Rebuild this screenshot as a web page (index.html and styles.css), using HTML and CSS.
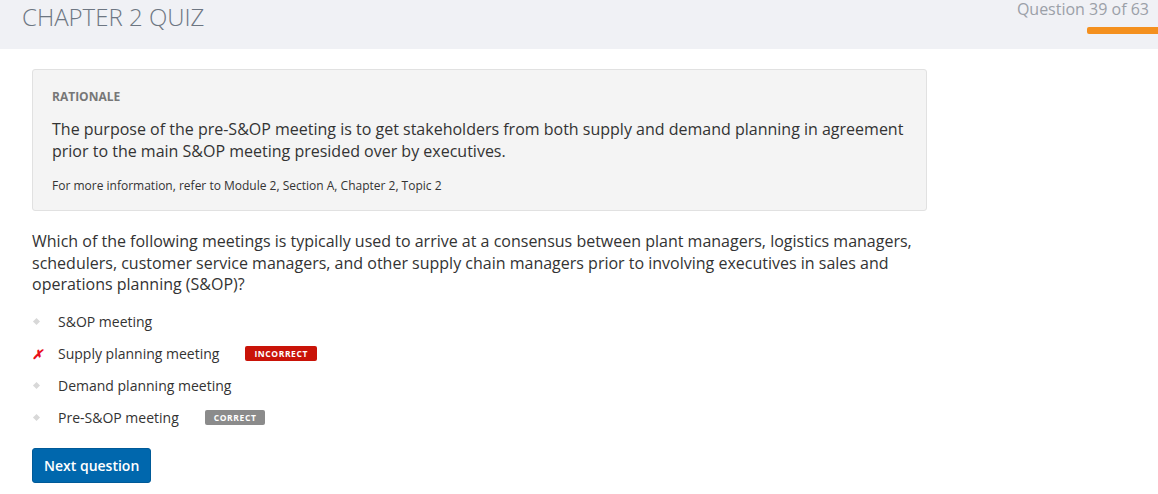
FILE: index.html
```html
<!DOCTYPE html>
<html>
<head>
<meta charset="utf-8">
<link rel="stylesheet" href="styles.css">
</head>
<body>
<header class="top">
  <h1 class="title">CHAPTER 2 QUIZ</h1>
  <div class="progress">
    <div class="count">Question 39 of 63</div>
    <div class="bar"></div>
  </div>
</header>
<main class="content">
  <section class="rationale">
    <div class="r-label">RATIONALE</div>
    <p class="r-text">The purpose of the pre-S&amp;OP meeting is to get stakeholders from both supply and demand planning in agreement prior to the main S&amp;OP meeting presided over by executives.</p>
    <p class="r-ref">For more information, refer to Module 2, Section A, Chapter 2, Topic 2</p>
  </section>
  <p class="question">Which of the following meetings is typically used to arrive at a consensus between plant managers, logistics managers, schedulers, customer service managers, and other supply chain managers prior to involving executives in sales and operations planning (S&amp;OP)?</p>
  <ul class="options">
    <li class="opt"><span class="mark dot"></span><span class="opt-text">S&amp;OP meeting</span></li>
    <li class="opt"><span class="mark x">&#x2717;</span><span class="opt-text">Supply planning meeting</span><span class="badge bad">INCORRECT</span></li>
    <li class="opt"><span class="mark dot"></span><span class="opt-text">Demand planning meeting</span></li>
    <li class="opt"><span class="mark dot"></span><span class="opt-text">Pre-S&amp;OP meeting</span><span class="badge good">CORRECT</span></li>
  </ul>
  <button class="next">Next question</button>
</main>
</body>
</html>
```
FILE: styles.css
```css
html, body { margin: 0; padding: 0; background: #fff; }
body { font-family: "Open Sans", "Noto Sans", sans-serif; color: #333; }
.top {
  height: 49px;
  background: #f0f1f5;
  display: flex;
  justify-content: space-between;
  align-items: flex-start;
}
.title {
  margin: 0;
  padding: 0 0 0 22px;
  font-weight: 300;
  font-size: 24px;
  line-height: 34px;
  color: #6d7682;
}
.progress {
  display: flex;
  flex-direction: column;
  align-items: flex-end;
}
.count {
  font-size: 16px;
  line-height: 20px;
  color: #9ba0a8;
  padding-right: 9px;
  margin-top: -1px;
}
.bar {
  margin-top: 8px;
  width: 71px;
  height: 7px;
  background: #f4901e;
  border-radius: 2px 0 0 2px;
}
.content { padding: 20px 32px 0 32px; width: 895px; }
.rationale {
  background: #f4f4f4;
  border: 1px solid #e1e1e1;
  border-radius: 3px;
  padding: 19px 19px 16px 19px;
}
.r-label { font-size: 12px; font-weight: 700; color: #777; line-height: 16px; }
.r-text { margin: 13px 0 0 0; font-size: 16px; line-height: 22px; color: #333; }
.r-ref { margin: 15px 0 0 0; font-size: 12px; line-height: 17px; color: #333; }
.question { margin: 20px 0 0 0; font-size: 16px; line-height: 21.5px; color: #333; }
.options { list-style: none; margin: 10px 0 0 0; padding: 0; }
.opt { display: flex; align-items: center; height: 32px; font-size: 14px; }
.mark { width: 26px; flex: none; display: flex; align-items: center; }
.dot::before {
  content: "";
  width: 5px; height: 5px;
  margin-left: 2px;
  background: #d8d8d8;
  transform: rotate(45deg);
  display: block;
}
.x { color: #e8101a; font-size: 13px; font-weight: 700; font-style: italic; }
.opt-text { color: #333; }
.badge {
  font-size: 8.5px;
  font-weight: 700;
  letter-spacing: 0.6px;
  color: #fff;
  border-radius: 2px;
  line-height: 15px;
  height: 15px;
  padding: 0 9px;
  margin-top: -1px;
}
.bad { background: #c91308; margin-left: 26px; }
.good { background: #8b8b8b; margin-left: 26px; }
.next {
  display: block;
  margin-top: 14px;
  font-family: "Open Sans", sans-serif;
  font-size: 14px;
  font-weight: 600;
  color: #fff;
  background: #0067ad;
  border: 1px solid #005a98;
  border-radius: 3px;
  padding: 0 11px;
  height: 35px;
  white-space: nowrap;
}
```
